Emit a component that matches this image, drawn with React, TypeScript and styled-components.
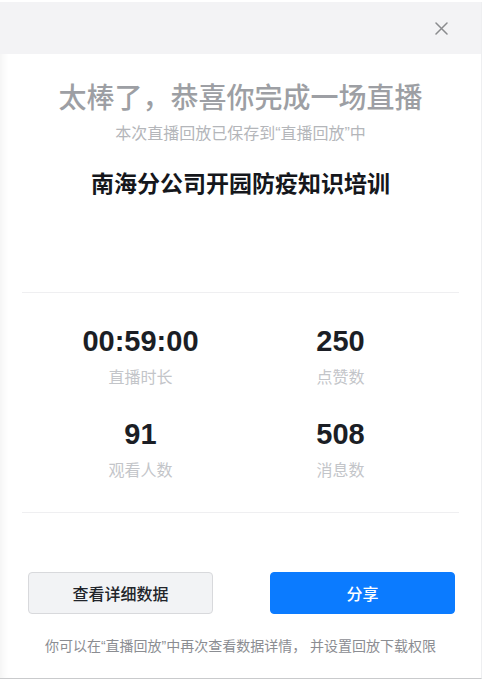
import styled, { createGlobalStyle } from "styled-components";

const GlobalStyle = createGlobalStyle`
  html, body {
    margin: 0;
    padding: 0;
    background: #ffffff;
  }
  body {
    font-family: "Liberation Sans", "Noto Sans CJK SC", sans-serif;
  }
`;

const Page = styled.div`
  width: 485px;
  height: 681px;
  box-sizing: border-box;
  padding: 2px 3px 2px 0;
`;

const Panel = styled.div`
  display: flex;
  flex-direction: column;
  width: 482px;
  height: 677px;
  box-sizing: border-box;
  background: #ffffff;
  border-bottom: 1px solid #c9cacc;
  border-right: 1px solid #eeeff1;
  box-shadow: inset 8px 0 8px -6px rgba(0, 0, 0, 0.06);
`;

const Header = styled.div`
  display: flex;
  justify-content: flex-end;
  align-items: center;
  height: 52px;
  padding-right: 30px;
  background: #f3f3f5;
  flex-shrink: 0;
`;

const CloseButton = styled.button`
  display: flex;
  align-items: center;
  justify-content: center;
  width: 20px;
  height: 20px;
  padding: 0;
  border: none;
  background: transparent;
  cursor: pointer;
`;

const Intro = styled.div`
  display: flex;
  flex-direction: column;
  align-items: center;
  padding-top: 28px;
`;

const Title = styled.h1`
  margin: 0;
  font-size: 28px;
  line-height: 34px;
  font-weight: 500;
  color: #9d9fa4;
`;

const Subtitle = styled.p`
  margin: 8px 0 0;
  font-size: 16px;
  line-height: 20px;
  color: #b4b6ba;
`;

const LiveName = styled.h2`
  margin: 24px 0 0;
  font-size: 23px;
  line-height: 32px;
  font-weight: 700;
  color: #15171c;
`;

const Divider = styled.hr<{ $top: number }>`
  margin: ${({ $top }) => $top}px 22px 0;
  border: none;
  border-top: 1px solid #efeff1;
`;

const StatsGrid = styled.div`
  display: grid;
  grid-template-columns: 200px 200px;
  justify-content: center;
  row-gap: 30px;
  padding: 32px 0 0;
`;

const Stat = styled.div`
  display: flex;
  flex-direction: column;
  align-items: center;
`;

const StatValue = styled.div`
  font-size: 29px;
  line-height: 32px;
  font-weight: 700;
  color: #1b1e25;
`;

const StatLabel = styled.div`
  margin-top: 11px;
  font-size: 16px;
  line-height: 20px;
  color: #c3c5c9;
`;

const Actions = styled.div`
  display: flex;
  justify-content: space-between;
  padding: 59px 26px 0 28px;
`;

const ActionButton = styled.button<{ $primary?: boolean }>`
  width: 185px;
  height: 42px;
  box-sizing: border-box;
  border-radius: 4px;
  border: 1px solid ${({ $primary }) => ($primary ? "#0b7bff" : "#d8d9dc")};
  background: ${({ $primary }) => ($primary ? "#0b7bff" : "#f2f3f5")};
  color: ${({ $primary }) => ($primary ? "#ffffff" : "#22252b")};
  font-family: "Liberation Sans", "Noto Sans CJK SC", sans-serif;
  font-size: 16px;
  font-weight: 500;
  cursor: pointer;
`;

const Footnote = styled.p`
  margin: 23px 0 0;
  text-align: center;
  font-size: 14px;
  line-height: 18px;
  color: #8b8d92;
  white-space: pre;
`;

const stats = [
  { value: "00:59:00", label: "直播时长" },
  { value: "250", label: "点赞数" },
  { value: "91", label: "观看人数" },
  { value: "508", label: "消息数" },
];

export default function App() {
  return (
    <>
      <GlobalStyle />
      <Page>
        <Panel>
          <Header>
            <CloseButton aria-label="关闭">
              <svg width="13" height="13" viewBox="0 0 13 13">
                <path
                  d="M1 1L12 12M12 1L1 12"
                  stroke="#8a8b8e"
                  strokeWidth="1.5"
                  strokeLinecap="round"
                />
              </svg>
            </CloseButton>
          </Header>
          <Intro>
            <Title>太棒了，恭喜你完成一场直播</Title>
            <Subtitle>本次直播回放已保存到“直播回放”中</Subtitle>
            <LiveName>南海分公司开园防疫知识培训</LiveName>
          </Intro>
          <Divider $top={92} />
          <StatsGrid>
            {stats.map((s) => (
              <Stat key={s.label}>
                <StatValue>{s.value}</StatValue>
                <StatLabel>{s.label}</StatLabel>
              </Stat>
            ))}
          </StatsGrid>
          <Divider $top={31} />
          <Actions>
            <ActionButton>查看详细数据</ActionButton>
            <ActionButton $primary>分享</ActionButton>
          </Actions>
          <Footnote>你可以在“直播回放”中再次查看数据详情， 并设置回放下载权限</Footnote>
        </Panel>
      </Page>
    </>
  );
}
